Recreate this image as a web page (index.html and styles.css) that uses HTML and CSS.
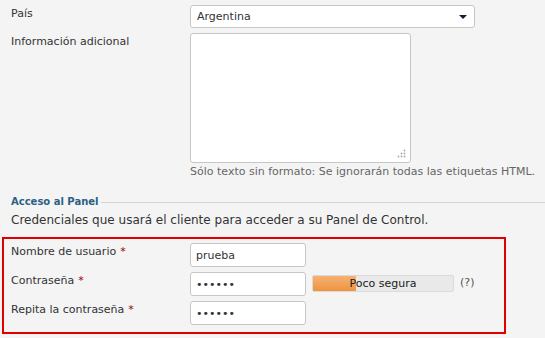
FILE: index.html
```html
<html>
    <head>
        <link rel="stylesheet" href="styles.css">
    </head>
    <body>
        <div class="row first">
            <label class="label">País</label>
            <div class="select-wrap">
                <select class="select">
                    <option>Argentina</option>
                </select>
            </div>
        </div>
        <div class="row">
            <label class="label">Información adicional</label>
            <div>
                <div class="area-wrap">
                    <textarea class="area"></textarea>
                    <svg class="grip" width="9" height="9" viewBox="0 0 9 9">
                        <circle cx="7.5" cy="1.5" r="0.9" fill="#a8a8a8" />
                        <circle cx="4.5" cy="4.5" r="0.9" fill="#a8a8a8" />
                        <circle cx="7.5" cy="4.5" r="0.9" fill="#a8a8a8" />
                        <circle cx="1.5" cy="7.5" r="0.9" fill="#a8a8a8" />
                        <circle cx="4.5" cy="7.5" r="0.9" fill="#a8a8a8" />
                        <circle cx="7.5" cy="7.5" r="0.9" fill="#a8a8a8" />
                    </svg>
                </div>
                <div class="help">Sólo texto sin formato: Se ignorarán todas las etiquetas HTML.</div>
            </div>
        </div>

        <div class="legend">
            <span>Acceso al Panel</span>
            <div class="legend-line"></div>
        </div>
        <div class="desc">Credenciales que usará el cliente para acceder a su Panel de Control.</div>

        <div class="highlight">
            <div class="row">
                <label class="label">Nombre de usuario<span class="req">*</span></label>
                <input class="field" type="text" value="prueba" />
            </div>
            <div class="row">
                <label class="label">Contraseña<span class="req">*</span></label>
                <input class="field" type="password" value="prueba" />
                <div class="meter">
                    <div class="meter-fill" style="width: 31%"></div>
                    <span class="meter-text">Poco segura</span>
                </div>
                <span class="hint">(?)</span>
            </div>
            <div class="row">
                <label class="label">Repita la contraseña<span class="req">*</span></label>
                <input class="field" type="password" value="prueba" />
            </div>
        </div>
    </body>
</html>
```

FILE: styles.css
```css
html{
    background-color: #f4f4f4;
}
body{
    margin: 0;
    padding-top: 5px;
    font-family: "DejaVu Sans", sans-serif;
    font-size: 11px;
    line-height: 14px;
    color: #333333;
}
.row{
    display: flex;
    align-items: flex-start;
    padding-left: 11px;
    margin-top: 5px;
}
.row.first{
    margin-top: 0px;
}
.label{
    width: 179px;
    flex-shrink: 0;
    padding-top: 2px;
}
.select-wrap{
    position: relative;
}
.select-wrap::after{
    content: "";
    position: absolute;
    right: 8px;
    top: 10px;
    border-left: 4px solid transparent;
    border-right: 4px solid transparent;
    border-top: 4px solid #1a1a3a;
}
.select{
    appearance: none;
    -webkit-appearance: none;
    width: 285px;
    height: 23px;
    background-color: white;
    border: 1px solid #c6c6c6;
    border-radius: 3px;
    font-family: "DejaVu Sans", sans-serif;
    font-size: 11px;
    color: #333333;
    padding-left: 6px;
    margin: 0;
}
.area-wrap{
    position: relative;
    width: 221px;
}
.area{
    display: block;
    width: 221px;
    height: 130px;
    background-color: white;
    border: 1px solid #c6c6c6;
    border-radius: 3px;
    margin: 0;
    box-sizing: border-box;
    resize: none;
}
.grip{
    position: absolute;
    right: 5px;
    bottom: 5px;
}
.help{
    margin-top: 2px;
    color: #666666;
}
.legend{
    display: flex;
    align-items: center;
    margin-top: 16px;
    padding-left: 11px;
    font-size: 10px;
    font-weight: bold;
    color: #2a6185;
}
.legend-line{
    flex: 1;
    height: 1px;
    margin-left: 3px;
    margin-top: 1px;
    background-color: #d4d4d4;
}
.desc{
    margin-top: 4px;
    padding-left: 11px;
    font-size: 12px;
}
.highlight{
    margin-top: 10px;
    margin-left: 2px;
    width: 504px;
    box-sizing: border-box;
    border: 2px solid #e00000;
    padding-top: 4px;
    padding-bottom: 7px;
}
.highlight .row{
    padding-left: 7px;
}
.highlight .row:first-child{
    margin-top: 0px;
}
.req{
    color: #990000;
    margin-left: 4px;
}
.field{
    width: 116px;
    height: 24px;
    box-sizing: border-box;
    background-color: white;
    border: 1px solid #c6c6c6;
    border-radius: 3px;
    margin: 0;
    padding-left: 5px;
    font-family: "DejaVu Sans", sans-serif;
    font-size: 11px;
    color: #333333;
}
.meter{
    position: relative;
    width: 142px;
    height: 17px;
    margin-top: 3px;
    margin-left: 6px;
    box-sizing: border-box;
    border: 1px solid #dadada;
    border-radius: 2px;
    background-color: #e9e9e9;
    overflow: hidden;
}
.meter-fill{
    height: 100%;
    background: linear-gradient(#f6b174, #ee9440);
}
.meter-text{
    position: absolute;
    left: 0;
    right: 0;
    top: 1px;
    text-align: center;
    color: #222222;
}
.hint{
    margin-left: 6px;
    margin-top: 4px;
    color: #555555;
}
```
